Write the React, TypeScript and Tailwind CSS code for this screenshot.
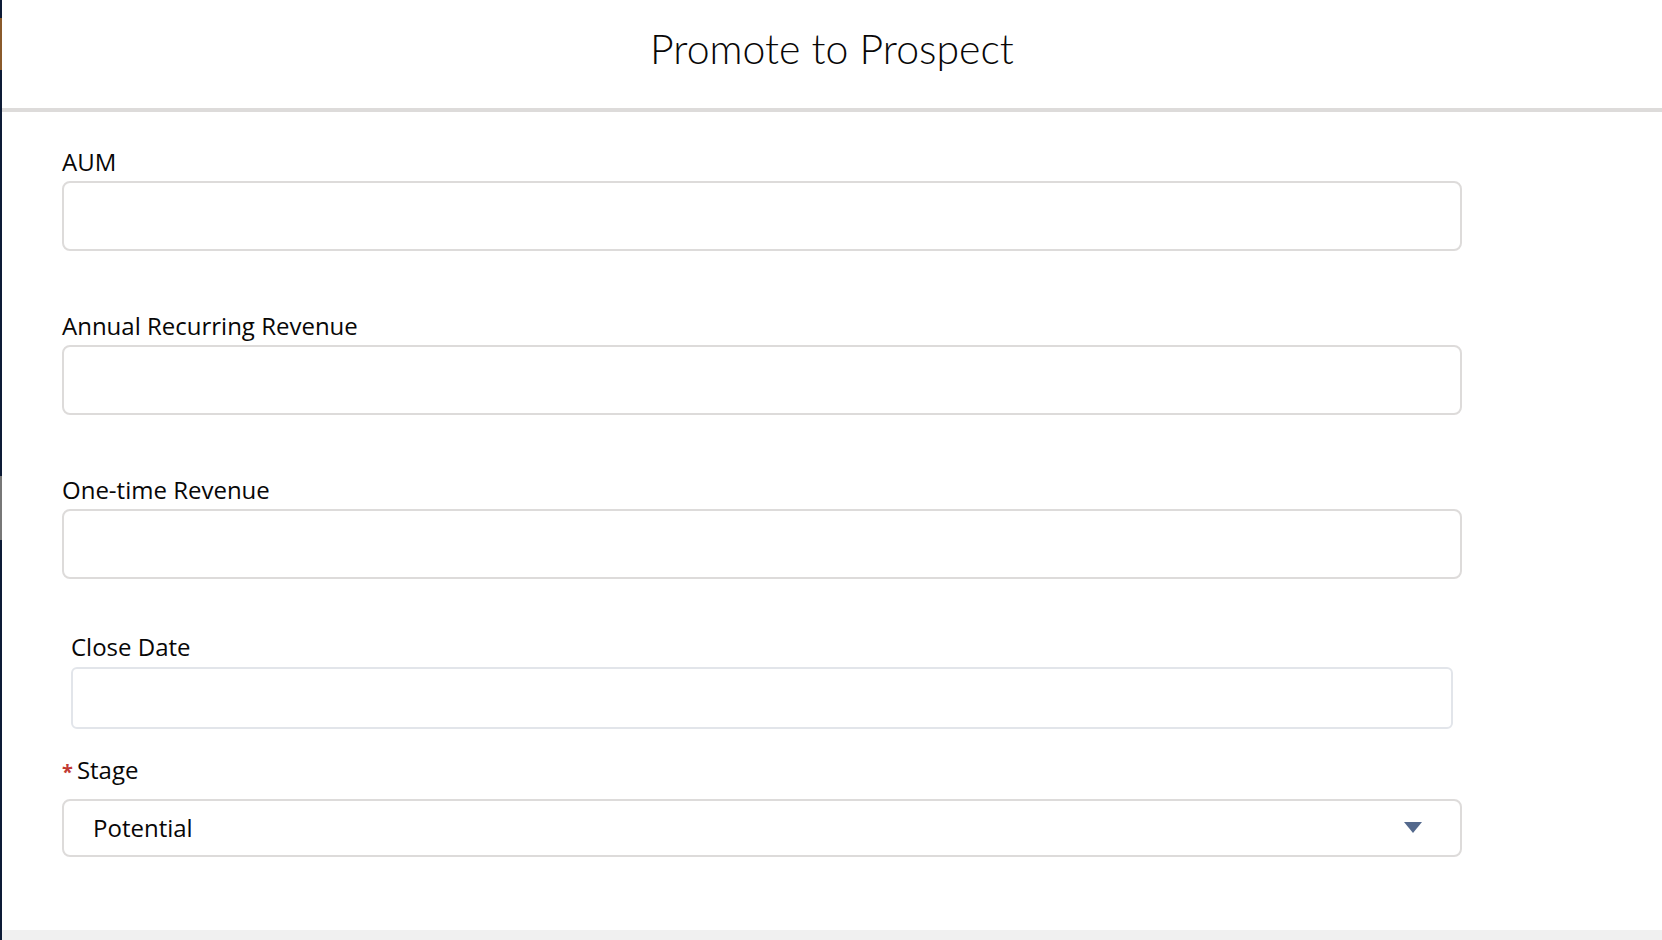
const sans = { fontFamily: "'Open Sans', Lato, sans-serif" };
const light = { fontFamily: "Lato, 'Open Sans', sans-serif" };

function Field({ label, className }: { label: string; className: string }) {
  return (
    <div className={className}>
      <label className="block text-[24px] leading-[26px] text-[#080707]">{label}</label>
      <input className="mt-[6px] block h-[70px] w-[1400px] rounded-[8px] border-2 border-[#dddbda] bg-white outline-none" />
    </div>
  );
}

export default function App() {
  return (
    <div style={sans} className="flex h-[940px] w-[1662px] overflow-hidden bg-white">
      <div className="flex w-[2px] flex-col bg-[#0d1b36]">
        <div className="h-[18px]" />
        <div className="h-[52px] bg-[#8a5a2b]" />
        <div className="h-[406px]" />
        <div className="h-[64px] bg-[#777777]" />
      </div>
      <div className="flex flex-1 flex-col">
        <header className="flex h-[112px] items-center justify-center border-b-4 border-[#dddbda] pb-[10px]">
          <h1 style={light} className="text-[41px] font-light text-[#080707]">Promote to Prospect</h1>
        </header>
        <main className="flex-1 pl-[60px]">
          <Field label="AUM" className="mt-[37px]" />
          <Field label="Annual Recurring Revenue" className="mt-[62px]" />
          <Field label="One-time Revenue" className="mt-[62px]" />
          <div className="mt-[55px] pl-[9px]">
            <label className="block text-[24px] leading-[26px] text-[#080707]">Close Date</label>
            <input className="mt-[7px] block h-[62px] w-[1382px] rounded-[6px] border-2 border-[#e2e5ea] bg-white outline-none" />
          </div>
          <div className="mt-[28px]">
            <label className="flex items-baseline text-[24px] leading-[26px] text-[#080707]">
              <span className="mr-[4px] text-[20px] font-bold text-[#c23934]">*</span>Stage
            </label>
            <div className="mt-[14px] flex h-[58px] w-[1400px] items-center justify-between rounded-[8px] border-2 border-[#dddbda] pl-[29px] pr-[38px]">
              <span className="text-[24px] text-[#080707]">Potential</span>
              <svg width="18" height="12" viewBox="0 0 18 12" className="text-[#54698d]">
                <path d="M0 0 H18 L9 11 Z" fill="currentColor" />
              </svg>
            </div>
          </div>
        </main>
        <footer className="h-[10px] bg-[#f0f0f0]" />
      </div>
    </div>
  );
}
